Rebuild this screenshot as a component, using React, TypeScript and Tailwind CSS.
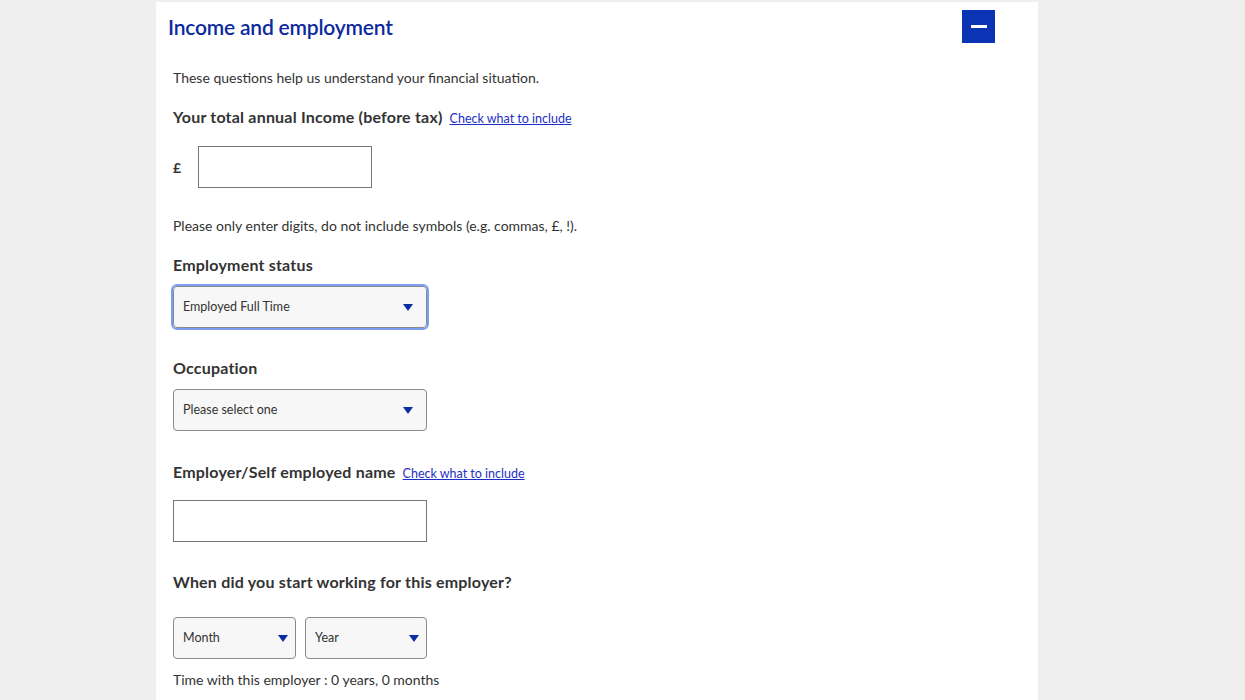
import React from 'react';

const font = { fontFamily: 'Lato, "Open Sans", Arial, sans-serif' };

function Caret() {
  return (
    <svg width="10" height="7" viewBox="0 0 10 7" className="shrink-0">
      <path d="M0 0 L10 0 L5 7 Z" fill="#0b2da3" />
    </svg>
  );
}

function SelectBox({ label, width, pr, focused }: { label: string; width: string; pr: string; focused?: boolean }) {
  return (
    <div
      className={`${width} ${pr} h-[42px] flex items-center justify-between pl-[9px] bg-[#f7f7f7] border border-[#8a8a8a] rounded-[4px] text-[12.5px] text-[#333] ${
        focused ? 'outline outline-2 outline-[#7b9ef0] outline-offset-0' : ''
      }`}
    >
      <span>{label}</span>
      <Caret />
    </div>
  );
}

function Label({ children, link }: { children: React.ReactNode; link?: boolean }) {
  return (
    <div className="flex items-baseline gap-[7px] h-[22px] leading-[22px]">
      <span className="text-[16px] font-bold tracking-[0.2px] text-[#333]">{children}</span>
      {link && (
        <a href="#" className="text-[12.5px] text-[#1c2fc4] underline">
          Check what to include
        </a>
      )}
    </div>
  );
}

export default function App() {
  return (
    <div className="min-h-[700px] bg-[#efefef] pt-[2px]" style={font}>
      <div className="ml-[156px] w-[882px] bg-white pb-[40px]">
        <div className="flex items-center justify-between pl-3 pr-[43px] pt-2 pb-2">
          <h2 className="text-[21px] font-semibold text-[#0b2a9e] tracking-[-0.2px]">Income and employment</h2>
          <button className="w-[33px] h-[33px] bg-[#0b34b4] flex items-center justify-center">
            <span className="block w-[16px] h-[3px] bg-white" />
          </button>
        </div>

        <div className="pl-[17px]">
          <p className="mt-[17px] text-[14px] leading-[20px] text-[#333]">
            These questions help us understand your financial situation.
          </p>

          <div className="mt-[18px]">
            <Label link>Your total annual Income (before tax)</Label>
          </div>

          <div className="mt-[18px] flex items-center gap-[17px]">
            <span className="text-[14px] font-bold text-[#333] w-[8px]">£</span>
            <input className="w-[174px] h-[42px] border border-[#777] bg-white" />
          </div>

          <p className="mt-[28px] text-[14px] leading-[20px] text-[#333]">
            Please only enter digits, do not include symbols (e.g. commas, £, !).
          </p>

          <div className="mt-[18px]">
            <Label>Employment status</Label>
          </div>
          <div className="mt-[10px]">
            <SelectBox label="Employed Full Time" width="w-[254px]" pr="pr-[13px]" focused />
          </div>

          <div className="mt-[29px]">
            <Label>Occupation</Label>
          </div>
          <div className="mt-[10px]">
            <SelectBox label="Please select one" width="w-[254px]" pr="pr-[13px]" />
          </div>

          <div className="mt-[30px]">
            <Label link>Employer/Self employed name</Label>
          </div>
          <div className="mt-[17px]">
            <input className="w-[254px] h-[42px] border border-[#777] bg-white" />
          </div>

          <div className="mt-[29px]">
            <Label>When did you start working for this employer?</Label>
          </div>
          <div className="mt-[24px] flex gap-[9px]">
            <SelectBox label="Month" width="w-[123px]" pr="pr-[7px]" />
            <SelectBox label="Year" width="w-[122px]" pr="pr-[7px]" />
          </div>

          <p className="mt-[11px] text-[14px] leading-[20px] text-[#333]">
            Time with this employer : 0 years, 0 months
          </p>
        </div>
      </div>
    </div>
  );
}
